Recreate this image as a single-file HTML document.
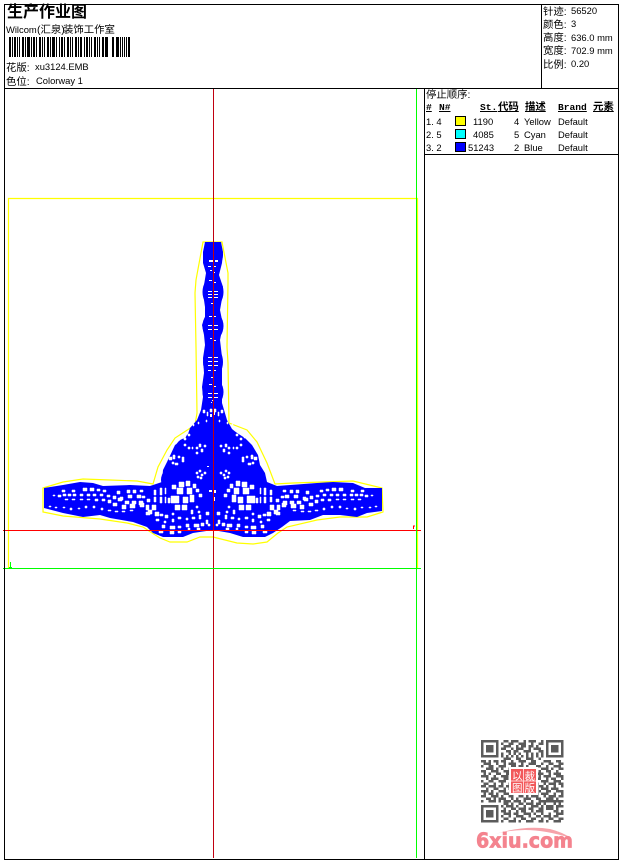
<!DOCTYPE html>
<html>
<head>
<meta charset="utf-8">
<style>
html,body{margin:0;padding:0;background:#fff;width:620px;height:860px;overflow:hidden}
#p{position:relative;width:620px;height:860px;font-family:"Liberation Sans","WenQuanYi Zen Hei","Noto Sans CJK SC",sans-serif;font-size:9.4px;color:#000}
#p svg{position:absolute;left:0;top:0}
.t{position:absolute;white-space:pre;line-height:12px;height:12px}
.c{font-size:10.4px}
.h{font-weight:bold;text-decoration:underline}
.m{font-family:"Liberation Mono","WenQuanYi Zen Hei",monospace;font-weight:bold;text-decoration:underline;font-size:9.6px}
</style>
</head>
<body>
<div id="p">
<svg width="620" height="860" viewBox="0 0 620 860" xmlns="http://www.w3.org/2000/svg">
<g fill="none" stroke="#ffff00" stroke-width="1.2">
<path d="M8.5 568V198.5H417.5V568"/>
<path d="M43 488L43 512L63 516L100 519L127 523L143 527L152 533L160 538L170 542L187 542L200 537L213 537L217 538L237 543L253 544L267 542L278 533L287 527L317 520L340 517L367 517L383 512L382 488L353 481L323 482L293 483L275 484L267 463L257 442L247 430L229 423L228 363L227 347L228 283L228 273L222 242L203 242L196 280L195 293L196 347L197 413L195 425L175 438L167 450L158 467L153 484L137 481L110 480L83 479L63 482Z"/>
</g>
<path fill="#0000ff" d="M44 488L63 485L80 482L93 483L103 486L130 485L150 486L162 482L163 470L168 460L175 445L187 437L190 428L197 420L201 410L203 397L202 387L204 373L203 358L205 345L204 335L202 325L205 317L205 307L203 293L204 285L206 273L203 263L203 252L205 242L221 242L223 252L222 263L219 275L223 287L223 293L220 310L223 325L220 340L222 357L222 373L222 393L222 403L227 420L232 429L237 433L245 438L252 445L258 455L260 465L265 473L267 482L277 486L317 483L333 482L353 483L365 488L382 488L382 511L367 513L357 517L340 515L323 515L310 520L290 521L282 527L273 533L265 537L243 537L230 533L213 530L193 533L183 537L163 537L153 533L147 527L133 522L110 518L100 515L83 517L63 513L44 508Z"/>
<g fill="#0000ff">
<circle cx="195" cy="441" r="10"/><circle cx="187" cy="450" r="12"/><circle cx="180" cy="465" r="13"/><circle cx="175" cy="480" r="14"/><circle cx="175" cy="525" r="12"/>
<circle cx="231" cy="441" r="10"/><circle cx="239" cy="450" r="12"/><circle cx="246" cy="465" r="13"/><circle cx="251" cy="480" r="14"/><circle cx="251" cy="525" r="12"/>
<ellipse cx="213" cy="255" rx="10" ry="13"/><ellipse cx="213" cy="292" rx="10.5" ry="15"/><ellipse cx="213" cy="326" rx="10.5" ry="14"/><ellipse cx="213" cy="362" rx="10" ry="15"/><ellipse cx="213" cy="392" rx="10.5" ry="14"/>
<rect x="166" y="472" width="94" height="58"/>
</g>
<defs>
<g id="holes" fill="#fff" stroke="#fff" stroke-width=".5">
<path d="M62 490h3v2h-3zM72 490h3v2h-3zM83 488h4v3h-4zM90 488h4v3h-4zM97 489h3v2h-3zM103 490h3v2h-3zM117 491h3v3h-3zM127 490h3v3h-3zM133 490h3v3h-3zM140 490h3v2h-3z"/>
<path d="M53 495h2v1h-2zM58 495h3v2h-3zM63 494h3v2h-3zM68 494h3v2h-3zM73 494h3v2h-3zM80 494h3v2h-3zM87 494h3v2h-3zM93 494h3v2h-3zM100 494h3v2h-3zM107 495h3v2h-3zM113 496h3v3h-3zM120 497h3v3h-3zM128 495h4v3h-4zM137 495h4v3h-4zM142 496h3v2h-3z"/>
<path d="M65 499h3v1h-3zM72 499h3v1h-3zM80 499h3v1h-3zM87 499h3v1h-3zM95 499h3v2h-3zM102 499h3v2h-3zM108 500h3v3h-3zM118 498h4v3h-4zM125 501h4v3h-4zM132 501h4v3h-4zM139 501h4v4h-4zM147 499h3v3h-3z"/>
<path d="M113 503h4v3h-4zM122 505h4v4h-4zM130 504h5v4h-5zM140 503h4v4h-4zM146 505h3v5h-3zM152 505h4v5h-4z"/>
<path d="M49 506h2v1h-2zM55 507h2v1h-2zM63 507h2v1h-2zM70 508h2v2h-2zM78 508h2v1h-2zM85 506h2v2h-2zM93 506h2v2h-2zM101 508h2v2h-2zM108 510h3v1h-3zM115 511h3v1h-3zM122 511h3v1h-3zM130 510h3v1h-3zM146 512h4v3h-4zM155 512h4v4h-4z"/>
<path d="M154 490h2v5h-2zM160 488h2v7h-2zM165 488h1v6h-1zM154 497h2v5h-2zM160 497h2v6h-2zM165 497h1v6h-1zM148 510h4v4h-4z"/>
<path d="M179 482h5v5h-5zM186 481h4v5h-4zM172 485h4v4h-4zM193 484h3v4h-3zM177 488h6v6h-6zM187 488h5v6h-5zM171 496h8v7h-8zM183 497h5v6h-5zM190 495h4v7h-4zM175 505h5v5h-5zM182 505h5v5h-5zM168 498h2v5h-2zM196 489h3v3h-3zM199 494h3v3h-3z"/>
<path d="M160 514h3v2h-3zM165 515h3v3h-3zM172 513h2v2h-2zM156 519h3v2h-3zM164 521h2v2h-2zM172 519h2v3h-2zM178 517h3v2h-3zM186 518h2v2h-2zM191 510h2v4h-2zM196 506h2v2h-2zM198 511h2v2h-2zM192 517h3v2h-3zM199 515h2v4h-2zM206 512h3v3h-3z"/>
<path d="M162 525h3v3h-3zM170 526h5v3h-5zM178 526h3v2h-3zM186 524h3v3h-3zM194 524h5v3h-5zM201 523h3v3h-3zM206 520h2v4h-2zM159 531h4v2h-4zM170 531h4v3h-4zM178 531h3v2h-3zM188 528h2v2h-2zM197 528h3v2h-3zM208 524h2v2h-2z"/>
<path d="M169 457h3v3h-3zM173 456h2v3h-2zM175 463h3v2h-3zM172 462h2v2h-2zM178 456h2v2h-2zM182 457h2v5h-2zM173 455h2v2h-2zM199 470h2v2h-2zM196 472h2v2h-2zM201 474h2v2h-2zM197 476h2v2h-2zM204 472h2v2h-2zM200 477h2v2h-2z"/>
<path d="M180 436h2v2h-2zM184 438h2v2h-2zM188 434h2v2h-2zM196 447h2v2h-2zM199 444h2v3h-2zM201 449h2v3h-2zM196 452h2v2h-2zM204 445h2v2h-2zM184 444h2v2h-2zM188 447h2v2h-2zM192 447h1v2h-1z"/>
<path d="M203 410h2v3h-2zM207 412h1v4h-1zM210 409h2v3h-2zM206 420h1v2h-1zM198 422h1v2h-1zM193 424h1v2h-1z"/>
</g>
</defs>
<use href="#holes"/>
<use href="#holes" transform="translate(426 0) scale(-1 1)"/>
<path fill="#fff" d="M209 260h4v2h-4zM215 260h3v2h-3zM208 266h3v1h-3zM214 266h2v1h-2zM210 270h2v1h-2zM214 272h1v1h-1zM209 280h3v1h-3zM214 282h2v1h-2zM208 291h4v1h-4zM214 291h4v1h-4zM208 294h4v1h-4zM214 294h4v1h-4zM208 297h4v1h-4zM214 297h4v1h-4zM211 303h2v1h-2zM209 316h3v1h-3zM214 316h2v1h-2zM208 325h4v1h-4zM214 325h4v1h-4zM208 329h4v1h-4zM214 329h4v1h-4zM210 338h2v1h-2zM214 340h2v1h-2zM208 357h4v1h-4zM214 357h4v1h-4zM208 361h4v1h-4zM214 361h4v1h-4zM208 365h4v1h-4zM214 365h4v1h-4zM208 370h3v1h-3zM214 370h2v1h-2zM211 377h2v1h-2zM209 384h3v1h-3zM214 386h2v1h-2zM208 393h4v1h-4zM214 393h4v1h-4zM208 397h4v1h-4zM214 397h4v1h-4zM212 400h2v1h-2zM211 402h1v1h-1zM213 412h2v3h-2zM210 414h2v3h-2zM209 490h3v2h-3zM214 490h2v3h-2zM213 497h2v4h-2zM207 466h2v1h-2z"/>
<g shape-rendering="crispEdges" fill="none">
<path stroke="#c00010" stroke-width="1" d="M213.5 89V858"/>
<path stroke="#ff0000" stroke-width="1" d="M3 530.5H421M413.5 529V526H415"/>
<path stroke="#00ff00" stroke-width="1" d="M416.5 89V858M3 568.5H421M10.5 562V567M9 567.5H12"/>
<path stroke="#000" stroke-width="1" d="M4.5 4.5H618.5V859.5H4.5ZM4.5 88.5H618.5M541.5 4.5V88.5M424.5 88.5V859.5M424.5 154.5H618.5"/>
</g>
<path fill="#000" d="M9 37h2v20h-2zM12 37h1v20h-1zM14 37h2v20h-2zM17 37h1v20h-1zM19 37h1v20h-1zM22 37h2v20h-2zM25 37h1v20h-1zM27 37h3v20h-3zM31 37h1v20h-1zM33 37h2v20h-2zM36 37h1v20h-1zM39 37h2v20h-2zM42 37h1v20h-1zM44 37h1v20h-1zM47 37h2v20h-2zM50 37h1v20h-1zM52 37h3v20h-3zM56 37h1v20h-1zM59 37h1v20h-1zM61 37h2v20h-2zM64 37h1v20h-1zM67 37h2v20h-2zM70 37h1v20h-1zM72 37h1v20h-1zM75 37h2v20h-2zM78 37h1v20h-1zM80 37h2v20h-2zM84 37h1v20h-1zM86 37h2v20h-2zM89 37h1v20h-1zM91 37h1v20h-1zM94 37h2v20h-2zM97 37h1v20h-1zM99 37h1v20h-1zM102 37h2v20h-2zM105 37h3v20h-3zM112 37h2v20h-2zM116 37h3v20h-3zM120 37h1v20h-1zM122 37h1v20h-1zM124 37h1v20h-1zM126 37h1v20h-1zM128 37h2v20h-2z"/>
<g shape-rendering="crispEdges">
<rect x="455.5" y="116.5" width="10" height="9" fill="#ffff00" stroke="#000"/>
<rect x="455.5" y="129.5" width="10" height="9" fill="#00ffff" stroke="#000"/>
<rect x="455.5" y="142.5" width="10" height="9" fill="#0000ff" stroke="#000"/>
</g>
<g transform="translate(481 740) scale(2.5)" opacity=".8">
<path fill="none" stroke="#333" stroke-width="1" d="M9 .5h2M12 .5h3M17 .5h1M19 .5h3M24 .5h1M8 1.5h1M11 1.5h2M15 1.5h3M20 1.5h1M23 1.5h2M9 2.5h3M14 2.5h1M16 2.5h2M19 2.5h2M22 2.5h1M8 3.5h2M12 3.5h1M14 3.5h3M19 3.5h1M21 3.5h3M10 4.5h2M13 4.5h2M17 4.5h3M23 4.5h2M8 5.5h1M11 5.5h1M13 5.5h1M15 5.5h1M18 5.5h1M20 5.5h1M22 5.5h1M24 5.5h1M8 6.5h1M10 6.5h1M12 6.5h1M14 6.5h1M16 6.5h1M18 6.5h1M20 6.5h1M22 6.5h1M24 6.5h1M9 7.5h3M14 7.5h2M18 7.5h3M23 7.5h1M0 8.5h2M3 8.5h1M5 8.5h2M8 8.5h2M12 8.5h1M15 8.5h3M20 8.5h2M25 8.5h3M30 8.5h2M1 9.5h3M6 9.5h1M9 9.5h1M11 9.5h3M16 9.5h1M19 9.5h3M24 9.5h1M27 9.5h2M31 9.5h2M0 10.5h1M3 10.5h2M7 10.5h3M12 10.5h2M15 10.5h2M18 10.5h1M22 10.5h2M26 10.5h1M29 10.5h3M2 11.5h3M6 11.5h1M8 11.5h1M11 11.5h1M14 11.5h3M20 11.5h2M24 11.5h3M28 11.5h1M31 11.5h2M0 12.5h2M4 12.5h3M9 12.5h3M13 12.5h1M16 12.5h1M18 12.5h3M23 12.5h1M26 12.5h2M30 12.5h1M1 13.5h1M3 13.5h1M6 13.5h2M10 13.5h2M22 13.5h3M27 13.5h1M29 13.5h3M0 14.5h3M5 14.5h1M8 14.5h3M23 14.5h1M25 14.5h3M30 14.5h3M2 15.5h1M4 15.5h3M9 15.5h2M22 15.5h2M26 15.5h1M28 15.5h2M32 15.5h1M0 16.5h1M3 16.5h2M7 16.5h3M24 16.5h3M29 16.5h3M1 17.5h2M5 17.5h1M8 17.5h1M11 17.5h1M22 17.5h1M25 17.5h1M27 17.5h3M31 17.5h2M0 18.5h2M3 18.5h3M7 18.5h2M10 18.5h2M23 18.5h2M26 18.5h1M29 18.5h1M32 18.5h1M2 19.5h1M5 19.5h2M9 19.5h1M11 19.5h1M22 19.5h1M24 19.5h3M28 19.5h3M0 20.5h3M4 20.5h1M7 20.5h3M12 20.5h1M14 20.5h3M19 20.5h2M23 20.5h1M26 20.5h2M30 20.5h3M1 21.5h1M3 21.5h2M6 21.5h1M9 21.5h3M13 21.5h1M16 21.5h3M21 21.5h2M24 21.5h3M29 21.5h1M32 21.5h1M0 22.5h2M4 22.5h3M8 22.5h1M11 22.5h2M15 22.5h2M18 22.5h1M20 22.5h3M25 22.5h1M27 22.5h3M31 22.5h2M2 23.5h2M5 23.5h1M7 23.5h3M12 23.5h1M14 23.5h1M17 23.5h3M22 23.5h2M26 23.5h3M30 23.5h1M0 24.5h1M3 24.5h3M7 24.5h1M9 24.5h3M13 24.5h3M17 24.5h1M20 24.5h1M23 24.5h8M31 24.5h2M9 25.5h2M12 25.5h1M15 25.5h2M18 25.5h3M22 25.5h2M25 25.5h1M29 25.5h1M31 25.5h1M8 26.5h1M10 26.5h3M14 26.5h1M17 26.5h1M20 26.5h3M24 26.5h1M26 26.5h3M30 26.5h3M9 27.5h1M12 27.5h2M15 27.5h3M19 27.5h2M23 27.5h2M26 27.5h3M30 27.5h1M8 28.5h2M11 28.5h1M14 28.5h1M16 28.5h2M20 28.5h1M22 28.5h3M29 28.5h2M32 28.5h1M9 29.5h3M13 29.5h2M17 29.5h3M21 29.5h1M24 29.5h1M27 29.5h1M30 29.5h3M8 30.5h1M11 30.5h1M14 30.5h3M19 30.5h1M22 30.5h2M25 30.5h3M29 30.5h2M9 31.5h2M13 31.5h1M16 31.5h2M20 31.5h2M24 31.5h1M27 31.5h2M31 31.5h2M8 32.5h1M11 32.5h3M15 32.5h1M18 32.5h3M23 32.5h2M26 32.5h1M29 32.5h3"/>
<path fill="none" stroke="#333" stroke-width="1" d="M.5.5h6v6h-6zM26.5.5h6v6h-6zM.5 26.5h6v6h-6z"/>
<path fill="#333" d="M2 2h3v3h-3zM28 2h3v3h-3zM2 28h3v3h-3z"/>
</g>
<rect x="509" y="767" width="29" height="28" fill="#fff"/>
<rect x="511" y="769" width="25" height="24" fill="#f2585a"/>
<path d="M523.5 769V793M511 781H536" stroke="#ffd0d0" stroke-width="1"/>
<text x="512" y="779.5" font-size="10.5" fill="#fff" font-family="'Noto Sans CJK SC',sans-serif">以</text>
<text x="524.5" y="779.5" font-size="10.5" fill="#fff" font-family="'Noto Sans CJK SC',sans-serif">裁</text>
<text x="512" y="791.5" font-size="10.5" fill="#fff" font-family="'Noto Sans CJK SC',sans-serif">图</text>
<text x="524.5" y="791.5" font-size="10.5" fill="#fff" font-family="'Noto Sans CJK SC',sans-serif">版</text>
<path d="M495 834Q525 825 550 829Q562 832 571 838Q545 830 525 830Q510 830 495 834Z" fill="#f6a3aa"/>
<text x="476" y="847.5" font-family="'DejaVu Sans',sans-serif" font-weight="bold" font-size="20" fill="#f4838e" stroke="#f4838e" stroke-width=".7" textLength="97" lengthAdjust="spacingAndGlyphs">6xiu.com</text>
</svg>

<div class="t" style="left:7px;top:1px;height:18px;line-height:18px;font-size:16px;font-weight:bold;font-family:'Noto Sans CJK SC',sans-serif">生产作业图</div>
<div class="t" style="left:6px;top:24px">Wilcom</div><div class="t c" style="left:37px;top:25px">(汇泉)</div><div class="t c" style="left:63px;top:25px">装饰工作室</div>
<div class="t c" style="left:6px;top:63px">花版:</div><div class="t" style="left:35px;top:61px">xu3124.EMB</div>
<div class="t c" style="left:6px;top:77px">色位:</div><div class="t" style="left:36px;top:75px">Colorway 1</div>

<div class="t c" style="left:543px;top:7px">针迹:</div><div class="t" style="left:571px;top:5px">56520</div>
<div class="t c" style="left:543px;top:20px">颜色:</div><div class="t" style="left:571px;top:18px">3</div>
<div class="t c" style="left:543px;top:33px">高度:</div><div class="t" style="left:571px;top:32px">636.0 mm</div>
<div class="t c" style="left:543px;top:46px">宽度:</div><div class="t" style="left:571px;top:45px">702.9 mm</div>
<div class="t c" style="left:543px;top:60px">比例:</div><div class="t" style="left:571px;top:58px">0.20</div>

<div class="t c" style="left:426px;top:90px">停止顺序:</div>
<div class="t m" style="left:426px;top:102px">#</div>
<div class="t m" style="left:439px;top:102px">N#</div>
<div class="t m" style="left:480px;top:102px">St.</div>
<div class="t h c" style="left:498px;top:102px">代码</div>
<div class="t h c" style="left:525px;top:102px">描述</div>
<div class="t m" style="left:558px;top:102px">Brand</div>
<div class="t h c" style="left:593px;top:102px">元素</div>

<div class="t" style="left:426px;top:116px">1. 4</div><div class="t" style="left:473px;top:116px">1190</div><div class="t" style="left:514px;top:116px">4</div><div class="t" style="left:524px;top:116px">Yellow</div><div class="t" style="left:558px;top:116px">Default</div>
<div class="t" style="left:426px;top:129px">2. 5</div><div class="t" style="left:473px;top:129px">4085</div><div class="t" style="left:514px;top:129px">5</div><div class="t" style="left:524px;top:129px">Cyan</div><div class="t" style="left:558px;top:129px">Default</div>
<div class="t" style="left:426px;top:142px">3. 2</div><div class="t" style="left:468px;top:142px">51243</div><div class="t" style="left:514px;top:142px">2</div><div class="t" style="left:524px;top:142px">Blue</div><div class="t" style="left:558px;top:142px">Default</div>
</div>
</body>
</html>
